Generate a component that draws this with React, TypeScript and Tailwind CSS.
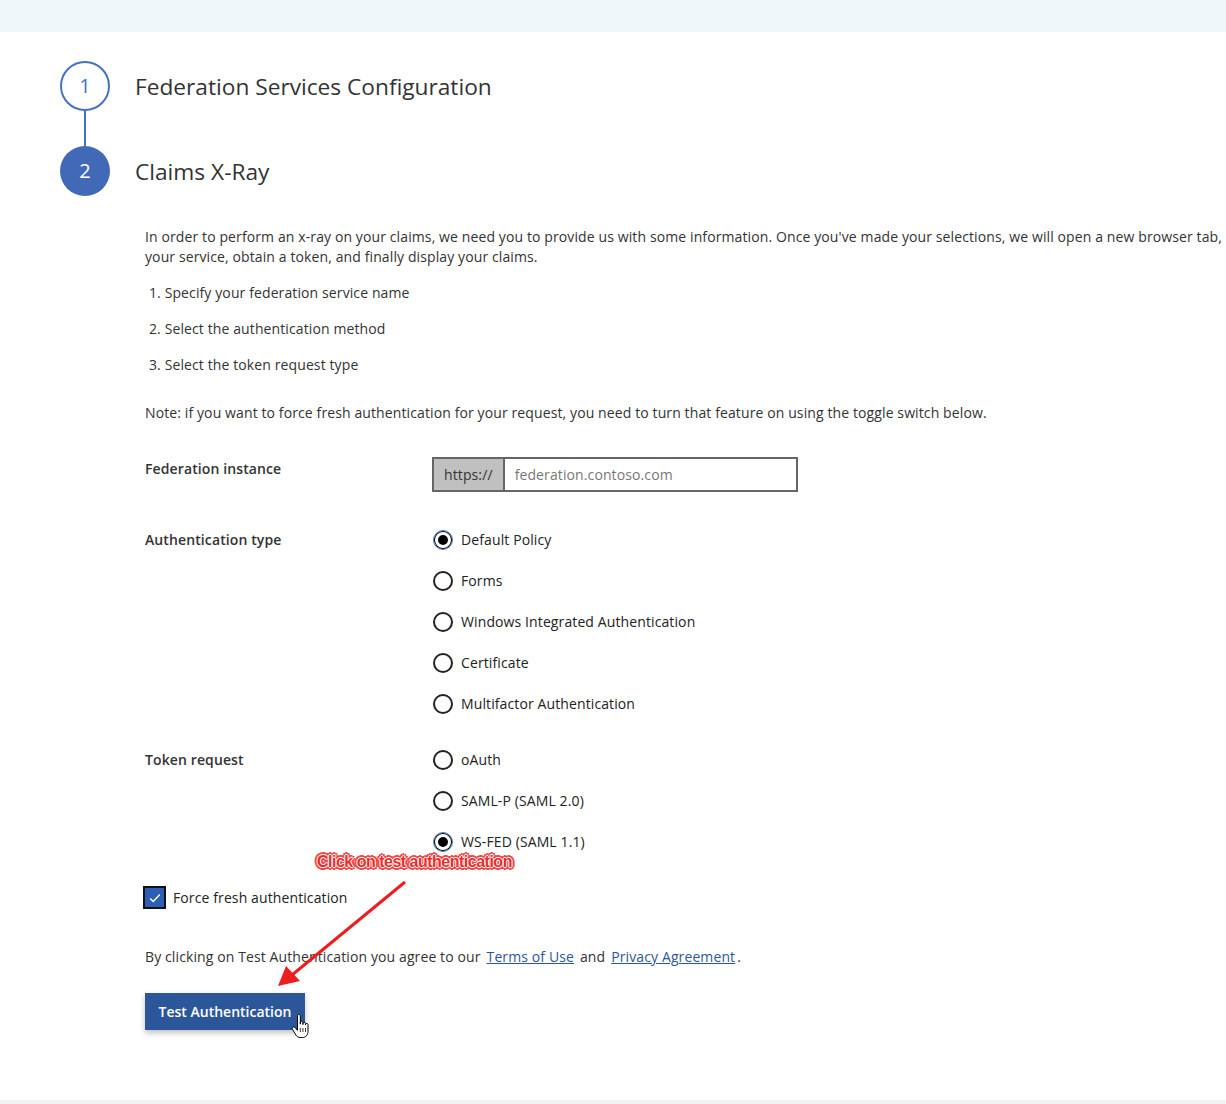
import React from 'react';

const authOptions = [
  { id: 'default', label: 'Default Policy', checked: true },
  { id: 'forms', label: 'Forms' },
  { id: 'wia', label: 'Windows Integrated Authentication' },
  { id: 'cert', label: 'Certificate' },
  { id: 'mfa', label: 'Multifactor Authentication' },
];

const tokenOptions = [
  { id: 'oauth', label: 'oAuth' },
  { id: 'samlp', label: 'SAML-P (SAML 2.0)' },
  { id: 'wsfed', label: 'WS-FED (SAML 1.1)', checked: true },
];

function Radio({ label, checked }: { label: string; checked?: boolean }) {
  return (
    <div className="flex items-center h-[21px]">
      {checked ? (
        <span className="w-[20px] h-[20px] rounded-full border border-[#4a78c8] flex items-center justify-center shrink-0">
          <span className="w-[16px] h-[16px] rounded-full border-[3px] border-white bg-black ring-1 ring-black" />
        </span>
      ) : (
        <span className="w-[20px] h-[20px] rounded-full border-2 border-[#222] shrink-0" />
      )}
      <span className="ml-[8px] text-[14px] text-[#222]">{label}</span>
    </div>
  );
}

export default function App() {
  return (
    <div className="relative min-h-screen flex flex-col overflow-x-hidden bg-white text-[#333] font-['Segoe_UI','Open_Sans',sans-serif]">
      <div className="h-[32px] bg-[#eff7f9]" />

      <div className="flex-1 pl-[60px] pt-[29px]">
        {/* Stepper */}
        <div className="flex items-center">
          <div className="w-[50px] h-[50px] rounded-full border-2 border-[#4472c4] flex items-center justify-center text-[20px] text-[#4472c4]">
            1
          </div>
          <h1 className="ml-[25px] mt-[2px] text-[22.7px] text-[#333]">Federation Services Configuration</h1>
        </div>
        <div className="ml-[24px] w-[2px] h-[35px] bg-[#4472c4]" />
        <div className="flex items-center">
          <div className="w-[50px] h-[50px] rounded-full bg-[#4169b8] flex items-center justify-center text-[20px] text-white">
            2
          </div>
          <h1 className="ml-[25px] mt-[2px] text-[22.7px] text-[#333]">Claims X-Ray</h1>
        </div>

        {/* Claims X-Ray body */}
        <div className="ml-[85px] mt-[31px] text-[14px] leading-[20px] tracking-[0.11px]">
          <p className="whitespace-nowrap">
            In order to perform an x-ray on your claims, we need you to provide us with some information. Once you've made your selections, we will open a new browser tab, redirect to
            <br />
            your service, obtain a token, and finally display your claims.
          </p>

          <ol className="mt-[16px] ml-[4px] flex flex-col gap-[16px]">
            <li>1. Specify your federation service name</li>
            <li>2. Select the authentication method</li>
            <li>3. Select the token request type</li>
          </ol>

          <p className="mt-[28px]">
            Note: if you want to force fresh authentication for your request, you need to turn that feature on using the toggle switch below.
          </p>

          {/* Federation instance */}
          <div className="mt-[34px] flex items-start">
            <div className="w-[287px] pt-[2px] font-semibold">Federation instance</div>
            <div className="flex w-[366px] h-[35px] border-2 border-[#666]">
              <span className="flex items-center pt-[1px] px-[10px] bg-[#c0c0c0] border-r-2 border-[#666] text-[#333]">https://</span>
              <span className="flex items-center pt-[1px] px-[10px] text-[#777]">federation.contoso.com</span>
            </div>
          </div>

          {/* Authentication type */}
          <div className="mt-[37px] flex items-start">
            <div className="w-[288px] pt-[1px] font-semibold">Authentication type</div>
            <div className="flex flex-col gap-[20px]">
              {authOptions.map((o) => (
                <Radio key={o.id} label={o.label} checked={o.checked} />
              ))}
            </div>
          </div>

          {/* Token request */}
          <div className="mt-[35px] flex items-start">
            <div className="w-[288px] pt-[1px] font-semibold">Token request</div>
            <div className="flex flex-col gap-[20px]">
              {tokenOptions.map((o) => (
                <Radio key={o.id} label={o.label} checked={o.checked} />
              ))}
            </div>
          </div>

          <div className="mt-[34px] -ml-[2px] flex items-center">
            <span className="w-[23px] h-[23px] border-2 border-[#111] bg-[#2b5fb5] flex items-center justify-center">
              <svg viewBox="0 0 16 16" className="w-[14px] h-[14px]" fill="none" stroke="white" strokeWidth="1.6">
                <path d="M2.5 8.5l3.5 3.5 7.5-8" />
              </svg>
            </span>
            <span className="ml-[7px] text-[#222]">Force fresh authentication</span>
          </div>

          <p className="mt-[38px]">
            By clicking on Test Authentication you agree to our
            <a className="mx-[6px] text-[#2b579a] underline">Terms of Use</a>
            and
            <a className="ml-[6px] mr-[2px] text-[#2b579a] underline">Privacy Agreement</a>.
          </p>

          <button className="mt-[26px] w-[160px] h-[37px] bg-[#2b579a] text-white text-[14px] font-semibold tracking-normal shadow-[0_3px_6px_rgba(0,0,0,0.25)]">
            Test Authentication
          </button>
        </div>
      </div>

      <div className="h-[4px] bg-[#f2f2f2]" />

      {/* Annotation overlay */}
      <div className="absolute left-[317px] top-[850px] text-[16px] font-bold tracking-[-0.5px] text-[#ee2a2a] font-['Liberation_Sans',sans-serif] [text-shadow:1px_0_0_#fff,-1px_0_0_#fff,0_1px_0_#fff,0_-1px_0_#fff,2px_2px_0_#f04848,-2px_-2px_0_#f04848,2px_-2px_0_#f04848,-2px_2px_0_#f04848,3px_0_0_#f04848,-3px_0_0_#f04848,0_3px_0_#f04848,0_-3px_0_#f04848]">
        Click on test authentication
      </div>
      <svg className="absolute left-0 top-0 pointer-events-none" width="1226" height="1104">
        <line x1="405" y1="882" x2="292" y2="975" stroke="#ee1c1c" strokeWidth="3" />
        <polygon points="278,986 286,966 300,981" fill="#ee1c1c" />
      </svg>
      <svg className="absolute left-[291px] top-[1014px]" width="20" height="26" viewBox="0 0 20 26">
        <path
          d="M6.5 2c0-.9.6-1.5 1.4-1.5s1.4.6 1.4 1.5v8.2V8.6c0-.8.6-1.3 1.3-1.3s1.3.5 1.3 1.3v2V9.6c0-.8.6-1.3 1.3-1.3s1.3.5 1.3 1.3v1.4V10.6c0-.7.6-1.2 1.2-1.2s1.3.5 1.3 1.2v6.6c0 3.6-2.2 6.3-5.4 6.3h-2.4c-2 0-3.3-.9-4.3-2.5L1.6 15.4c-.6-.9-.3-1.9.5-2.3.8-.4 1.6-.1 2.2.7l2.2 2.6Z"
          fill="white"
          stroke="black"
          strokeWidth="1"
          strokeLinejoin="round"
        />
        <path d="M9.3 14v4M11.9 14v4M14.5 14v4" stroke="black" strokeWidth="0.8" />
      </svg>
    </div>
  );
}
